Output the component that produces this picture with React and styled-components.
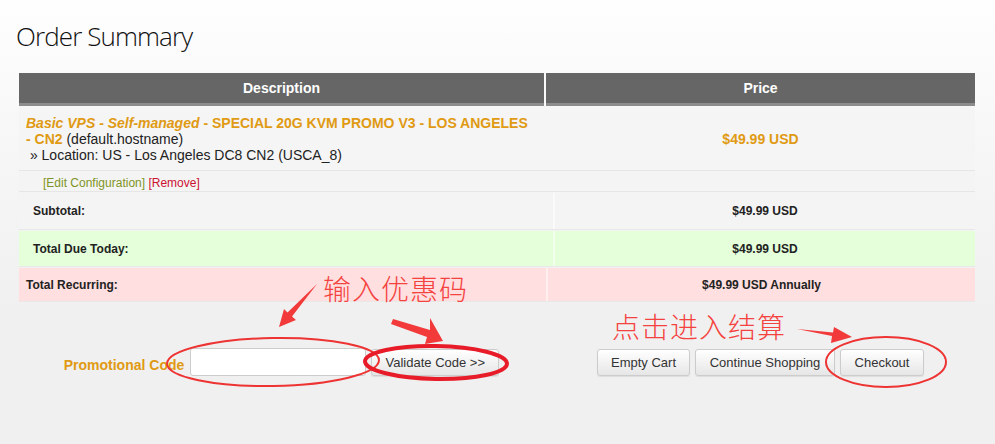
import React from 'react'
import styled, { createGlobalStyle } from 'styled-components'

const GlobalStyle = createGlobalStyle`
   * { box-sizing: border-box; }
   body {
      margin: 0;
      font-family: "Liberation Sans", Arial, sans-serif;
      background: linear-gradient(#fefefe 0, #f6f6f6 160px, #f0f0f0 310px, #f0f0f0 100%);
      color: #222;
   }
`

const App = () => {
   return (
      <Page>
         <GlobalStyle />
         <Title>Order Summary</Title>
         <Table>
            <HeaderRow>
               <HeadCell>Description</HeadCell>
               <HeadCell>Price</HeadCell>
            </HeaderRow>
            <ItemRow>
               <ItemDesc>
                  <Product>
                     <em>Basic VPS - Self-managed</em> - SPECIAL 20G KVM PROMO V3 - LOS ANGELES - CN2
                  </Product>{' '}
                  (default.hostname)
                  <br />
                  &nbsp;» Location: US - Los Angeles DC8 CN2 (USCA_8)
               </ItemDesc>
               <ItemPrice>$49.99 USD</ItemPrice>
            </ItemRow>
            <ConfigRow>
               <ConfigLinks>
                  <EditLink>[Edit Configuration]</EditLink> <RemoveLink>[Remove]</RemoveLink>
               </ConfigLinks>
               <div />
            </ConfigRow>
            <SummaryRow $h={37} $wide>
               <SummaryLabel $indent>Subtotal:</SummaryLabel>
               <SummaryValue>$49.99 USD</SummaryValue>
            </SummaryRow>
            <SummaryRow $h={36} $wide $tone="#e4ffda">
               <SummaryLabel $indent>Total Due Today:</SummaryLabel>
               <SummaryValue>$49.99 USD</SummaryValue>
            </SummaryRow>
            <SummaryRow $h={34} $tone="#ffdfdf">
               <SummaryLabel>Total Recurring:</SummaryLabel>
               <SummaryValue>$49.99 USD Annually</SummaryValue>
            </SummaryRow>
         </Table>
         <Actions>
            <ActionGroup>
               <PromoLabel>Promotional Code</PromoLabel>
               <PromoInput type="text" />
               <Button $w={128}>Validate Code &gt;&gt;</Button>
            </ActionGroup>
            <ActionGroup $gap={5}>
               <Button $w={93}>Empty Cart</Button>
               <Button $w={140}>Continue Shopping</Button>
               <Button $w={84}>Checkout</Button>
            </ActionGroup>
         </Actions>

         <Note $x={323} $y={270}>输入优惠码</Note>
         <Note $x={612} $y={308}>点击进入结算</Note>
         <Marks width="995" height="444" viewBox="0 0 995 444">
            <g fill="#f23a3a">
               <polygon points="317,284 292,316.5 296,320 279,327 284,309 287.5,312.5" />
               <polygon points="391,324 427,337 425,344 443,341 430,318 430,330 393,319" />
               <polygon points="797,329 832,336 831,343 852,337 834,327 833,332.5" />
            </g>
            <g fill="none">
               <ellipse cx="273" cy="362" rx="106" ry="24" stroke="#ee3333" strokeWidth="2" transform="rotate(-1 273 362)" />
               <ellipse cx="436" cy="362.5" rx="71" ry="16.5" stroke="#e81c28" strokeWidth="4" transform="rotate(1 436 362)" />
               <ellipse cx="886" cy="362" rx="60" ry="25" stroke="#ee3333" strokeWidth="2" />
            </g>
         </Marks>
      </Page>
   )
}

export default App

const Page = styled.div`
   position: relative;
   width: 995px;
   height: 444px;
   padding: 18px 20px 0 19px;
   overflow: hidden;
`

const Title = styled.h1`
   margin: 0 0 18px -3px;
   font-family: "Open Sans", "Liberation Sans", sans-serif;
   font-weight: 300;
   font-size: 26px;
   line-height: 37px;
   color: #111;
   letter-spacing: -0.9px;
`

const Table = styled.div`
   width: 956px;
   display: flex;
   flex-direction: column;
`

const HeaderRow = styled.div`
   display: grid;
   grid-template-columns: 525px 429px;
   column-gap: 2px;
`

const HeadCell = styled.div`
   height: 33px;
   background: #666;
   border-bottom: 3px solid #8c8c8c;
   color: #fff;
   font-weight: bold;
   font-size: 14px;
   line-height: 30px;
   text-align: center;
`

const ItemRow = styled.div`
   display: grid;
   grid-template-columns: 525px 429px;
   column-gap: 2px;
   height: 65px;
   border-bottom: 1px solid #e6e6e6;
   background: #f5f5f5;
`

const ItemDesc = styled.div`
   padding: 9px 12px 0 7px;
   font-size: 14px;
   line-height: 16px;
   color: #222;
`

const Product = styled.span`
   color: #e09a13;
   font-weight: bold;
`

const ItemPrice = styled.div`
   display: flex;
   align-items: center;
   justify-content: center;
   padding-top: 2px;
   color: #e09a13;
   font-weight: bold;
   font-size: 14px;
`

const ConfigRow = styled.div`
   display: grid;
   grid-template-columns: 525px 429px;
   column-gap: 2px;
   height: 21px;
   border-bottom: 1px solid #e6e6e6;
   background: #f4f4f4;
`

const ConfigLinks = styled.div`
   padding: 2px 0 0 24px;
   font-size: 12px;
   line-height: 20px;
`

const EditLink = styled.span`
   color: #7f9426;
`

const RemoveLink = styled.span`
   color: #cc1133;
`

const SummaryRow = styled.div`
   display: grid;
   grid-template-columns: ${p => (p.$wide ? '532px 422px' : '525px 429px')};
   column-gap: 2px;
   height: ${p => p.$h}px;
   margin-top: 1px;
   background: ${p => p.$tone || '#f4f4f4'};
   border-bottom: 1px solid #e8e8e8;
`

const SummaryLabel = styled.div`
   display: flex;
   align-items: center;
   padding-left: ${p => (p.$indent ? 14 : 7)}px;
   font-size: 12px;
   font-weight: bold;
   color: #222;
`

const SummaryValue = styled.div`
   display: flex;
   align-items: center;
   justify-content: center;
   font-size: 12px;
   font-weight: bold;
   color: #222;
   border-left: 2px solid rgba(255, 255, 255, 0.5);
`

const Actions = styled.div`
   display: grid;
   grid-template-columns: 525px 429px;
   column-gap: 2px;
   width: 956px;
   margin-top: 46px;
`

const ActionGroup = styled.div`
   display: flex;
   align-items: center;
   justify-content: center;
   gap: ${p => p.$gap || 0}px;
`

const PromoLabel = styled.span`
   margin: 5px 6px 0 0;
   color: #e09a13;
   font-size: 14px;
   font-weight: bold;
`

const PromoInput = styled.input`
   width: 176px;
   height: 28px;
   margin-right: 5px;
   background: #fff;
   border: 1px solid #ccc;
   border-radius: 3px;
`

const Button = styled.button`
   width: ${p => p.$w}px;
   height: 27px;
   padding: 0;
   font-family: "Liberation Sans", Arial, sans-serif;
   font-size: 13px;
   color: #333;
   background: linear-gradient(#fff, #e6e6e6);
   border: 1px solid #ccc;
   border-radius: 3px;
   box-shadow: 0 1px 1px rgba(0, 0, 0, 0.08);
`

const Note = styled.div`
   position: absolute;
   left: ${p => p.$x}px;
   top: ${p => p.$y}px;
   font-family: "Noto Sans CJK SC", sans-serif;
   font-size: 28px;
   font-weight: 300;
   line-height: 36px;
   letter-spacing: 1px;
   color: #f4433f;
   white-space: nowrap;
`

const Marks = styled.svg`
   position: absolute;
   left: 0;
   top: 0;
   pointer-events: none;
`
